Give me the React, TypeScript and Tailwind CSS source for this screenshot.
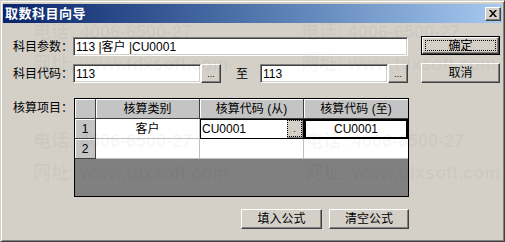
import React from 'react';

const font = { fontFamily: '"Liberation Sans", "Noto Sans CJK SC", sans-serif' };

function RaisedButton({ label, width, isDefault = false }: { label: string; width: string; isDefault?: boolean }) {
  if (isDefault) {
    return (
      <div className={`${width} h-[19px] border border-black`}>
        <div className="relative w-full h-full bg-[#d4d0c8] border border-t-white border-l-white border-b-[#404040] border-r-[#404040] shadow-[inset_-1px_-1px_0_#808080] flex items-center justify-center text-[12px] text-black">
          <span className="absolute inset-[2px] border border-dotted border-black" />
          {label}
        </div>
      </div>
    );
  }
  return (
    <div className={`${width} h-[20px] bg-[#d4d0c8] border border-t-white border-l-white border-b-[#404040] border-r-[#404040] shadow-[inset_-1px_-1px_0_#808080] flex items-center justify-center text-[12px] text-black`}>
      {label}
    </div>
  );
}

function SunkenInput({ value, width }: { value: string; width: string }) {
  return (
    <div className={`${width} h-[19px] bg-white border border-t-[#808080] border-l-[#808080] border-b-white border-r-white shadow-[inset_1px_1px_0_#404040,inset_-1px_-1px_0_#d4d0c8] flex items-center pl-[2px] text-[12px] text-black whitespace-pre`}>
      {value}
    </div>
  );
}

function DotsButton() {
  return (
    <div className="w-[20px] h-[19px] bg-[#d4d0c8] border border-t-white border-l-white border-b-[#404040] border-r-[#404040] shadow-[inset_-1px_-1px_0_#808080] flex items-end justify-center pb-[3px] text-[9px] leading-none text-black">
      ...
    </div>
  );
}

// faint phone / site watermark stamped over the dialog
function Watermark({ x, y }: { x: number; y: number }) {
  return (
    <div className="absolute pointer-events-none text-[18px] font-bold leading-none text-black/[0.04] whitespace-nowrap" style={{ left: x, top: y }}>
      <div>电话: 4006-6500-27</div>
      <div className="mt-[14px]">网址: www.tdxsoft.com</div>
    </div>
  );
}

export default function App() {
  return (
    <div className="w-[505px] h-[242px] relative overflow-hidden bg-[#d4d0c8] border border-t-[#d4d0c8] border-l-[#d4d0c8] border-b-[#404040] border-r-[#404040] shadow-[inset_1px_1px_0_#fff,inset_-1px_-1px_0_#808080] px-[2px] pt-[3px]" style={font}>
      {/* title bar */}
      <div className="h-[19px] bg-gradient-to-r from-[#0a246a] to-[#a6caf0] flex items-center justify-between pl-[2px] pr-[1px]">
        <span className="text-white font-bold text-[13px] tracking-[0.5px]">取数科目向导</span>
        <div className="w-[16px] h-[14px] bg-[#d4d0c8] border border-t-white border-l-white border-b-[#404040] border-r-[#404040] shadow-[inset_-1px_-1px_0_#808080] flex items-center justify-center">
          <svg width="8" height="7" viewBox="0 0 8 7">
            <path d="M0 0h2l2 2.5L6 0h2L5 3.5 8 7H6L4 4.5 2 7H0l3-3.5z" fill="black" />
          </svg>
        </div>
      </div>

      <div className="flex pl-[10px] text-[12px] text-black">
        {/* left column */}
        <div className="w-[396px] flex flex-col pt-[14px]">
          <div className="flex items-center">
            <span className="w-[60px]">科目参数：</span>
            <SunkenInput value="113 |客户 |CU0001" width="w-[335px]" />
          </div>

          <div className="flex items-center mt-[8px]">
            <span className="w-[60px]">科目代码：</span>
            <SunkenInput value="113" width="w-[128px]" />
            <DotsButton />
            <span className="ml-[15px] w-[24px]">至</span>
            <SunkenInput value="113" width="w-[128px]" />
            <DotsButton />
          </div>

          <div className="flex items-start mt-[15px]">
            <span className="w-[61px] pt-[1px]">核算项目：</span>
            <div className="w-[335px] h-[99px] border border-black bg-[#808080] flex flex-col">
              {/* header */}
              <div className="flex h-[20px] bg-[#c4c4c4]">
                <div className="w-[21px] border-r border-b border-[#404040] shadow-[inset_1px_1px_0_#fff]" />
                <div className="w-[104px] border-r border-b border-[#404040] shadow-[inset_1px_1px_0_#fff] flex items-center justify-center">核算类别</div>
                <div className="w-[104px] border-r border-b border-[#404040] shadow-[inset_1px_1px_0_#fff] flex items-center justify-center">核算代码 (从)</div>
                <div className="w-[104px] border-b border-[#404040] shadow-[inset_1px_1px_0_#fff] flex items-center justify-center">核算代码 (至)</div>
              </div>
              {/* row 1 */}
              <div className="flex h-[20px] bg-white">
                <div className="w-[21px] bg-[#c4c4c4] border-r border-b border-[#404040] shadow-[inset_1px_1px_0_#fff] flex items-center justify-center">1</div>
                <div className="w-[104px] border-r border-b border-[#c0c0c0] flex items-center justify-center">客户</div>
                <div className="w-[104px] border border-black flex items-center justify-between pl-[1px]">
                  <span>CU0001</span>
                  <div className="relative w-[16px] h-[18px] bg-[#d4d0c8] border-r border-b border-[#808080] flex items-end justify-center text-[9px] leading-none pb-[3px]">
                    <span className="absolute inset-0 border border-dotted border-black" />
                    .
                  </div>
                </div>
                <div className="w-[104px] border-2 border-black flex items-center justify-center">CU0001</div>
              </div>
              {/* row 2 */}
              <div className="flex h-[20px] bg-white">
                <div className="w-[21px] bg-[#c4c4c4] border-r border-b border-[#404040] shadow-[inset_1px_1px_0_#fff] flex items-center justify-center">2</div>
                <div className="w-[104px] border-r border-b border-[#c0c0c0]" />
                <div className="w-[104px] border-r border-b border-[#c0c0c0]" />
                <div className="w-[104px] border-b border-[#c0c0c0]" />
              </div>
            </div>
          </div>

          <div className="flex justify-end gap-[7px] mt-[12px]">
            <RaisedButton label="填入公式" width="w-[81px]" />
            <RaisedButton label="清空公式" width="w-[80px]" />
          </div>
        </div>

        {/* right column */}
        <div className="ml-[12px] flex flex-col gap-[8px] pt-[13px]">
          <RaisedButton label="确定" width="w-[79px]" isDefault />
          <RaisedButton label="取消" width="w-[79px]" />
        </div>
      </div>

      <Watermark x={32} y={22} />
      <Watermark x={300} y={22} />
      <Watermark x={32} y={131} />
      <Watermark x={304} y={131} />
    </div>
  );
}
